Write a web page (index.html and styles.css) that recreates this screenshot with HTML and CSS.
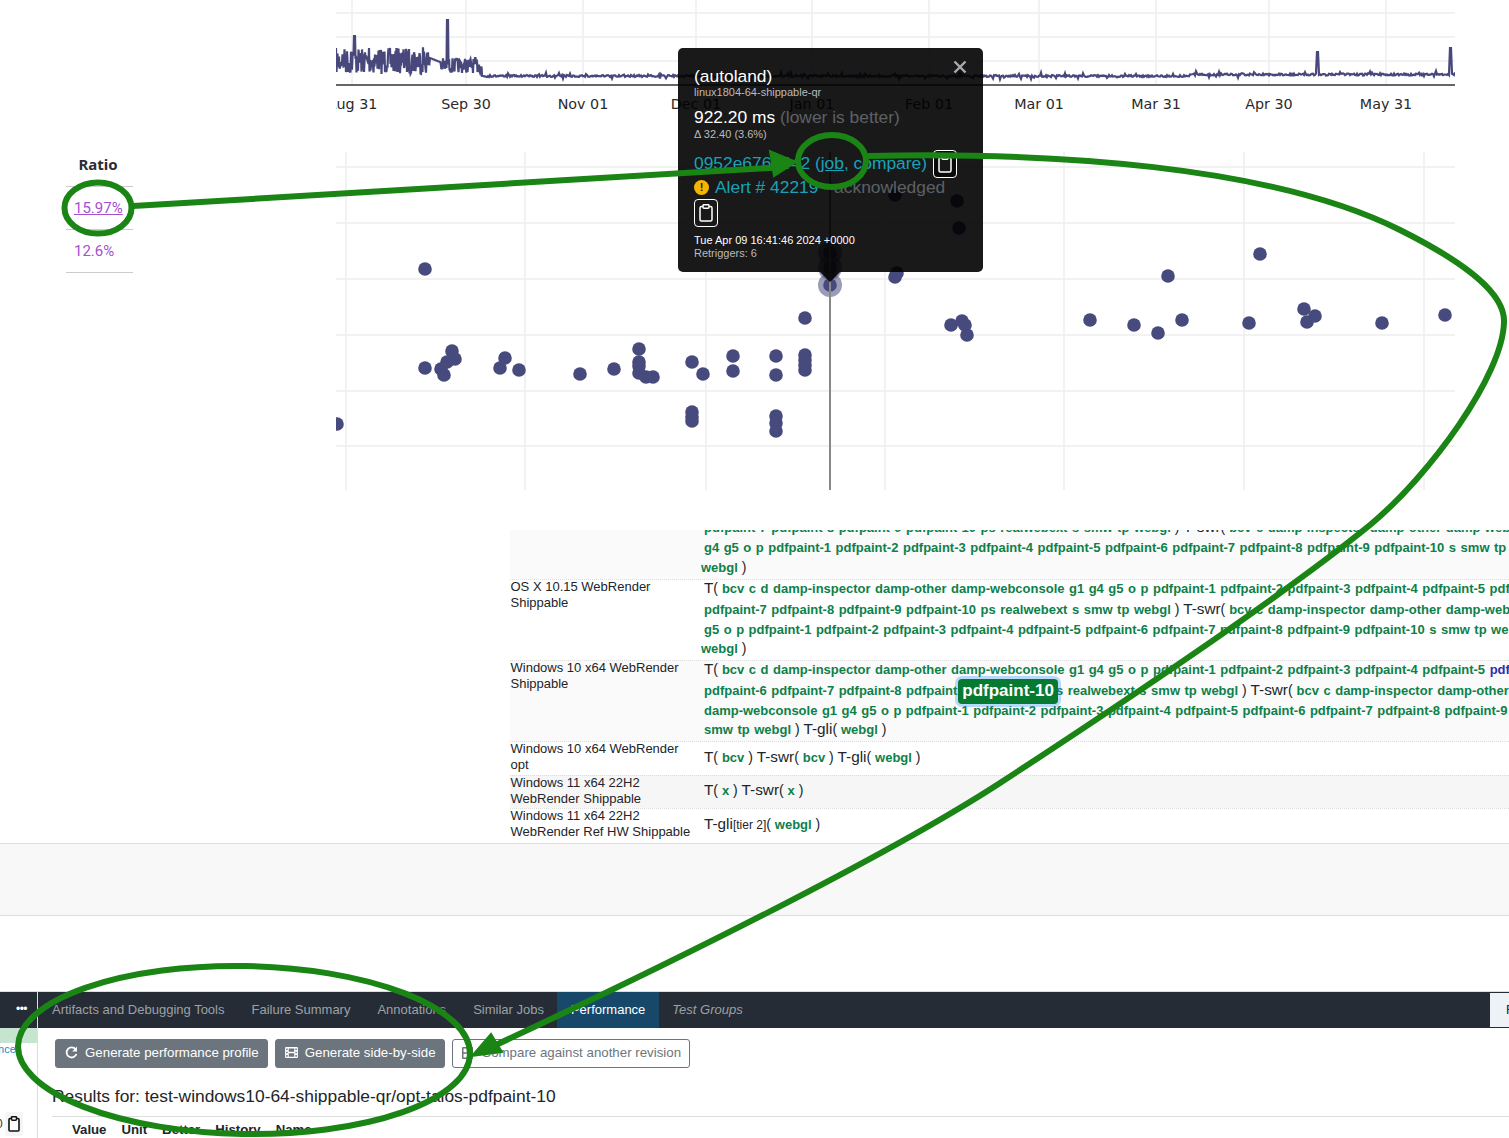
FILE: index.html
```html
<!DOCTYPE html>
<html lang="en">
<head>
    <meta charset="UTF-8">
    <meta name="viewport" content="width=device-width, initial-scale=1.0">
    <title>Perfherder alert</title>
    <link rel="stylesheet" href="styles.css">
</head>
<body>
<div class="page">
    <!-- Graph and ratio column -->
    <section class="top">
        <div class="ratio">
            <div class="ratio-head">Ratio</div>
            <div class="ratio-cell"><a class="ratio-link">15.97%</a></div>
            <div class="ratio-cell">12.6%</div>
        </div>
        <div class="graphs">
            <svg id="graph" class="graph" width="1119" height="490" viewBox="336 0 1119 490">
                <g class="grid">
                    <line x1="336" x2="1455" y1="13" y2="13"/>
                    <line x1="336" x2="1455" y1="37" y2="37"/>
                    <line x1="336" x2="1455" y1="61" y2="61"/>
                    <line x1="352" x2="352" y1="0" y2="85"/>
                    <line x1="466" x2="466" y1="0" y2="85"/>
                    <line x1="583" x2="583" y1="0" y2="85"/>
                    <line x1="696" x2="696" y1="0" y2="85"/>
                    <line x1="812" x2="812" y1="0" y2="85"/>
                    <line x1="929" x2="929" y1="0" y2="85"/>
                    <line x1="1039" x2="1039" y1="0" y2="85"/>
                    <line x1="1156" x2="1156" y1="0" y2="85"/>
                    <line x1="1269" x2="1269" y1="0" y2="85"/>
                    <line x1="1386" x2="1386" y1="0" y2="85"/>
                </g>
                <path id="overview" class="overview"/>
                <line class="axis" x1="336" x2="1455" y1="85" y2="85"/>
                <g class="ticks">
                    <text x="352" y="109">Aug 31</text>
                    <text x="466" y="109">Sep 30</text>
                    <text x="583" y="109">Nov 01</text>
                    <text x="696" y="109">Dec 01</text>
                    <text x="812" y="109">Jan 01</text>
                    <text x="929" y="109">Feb 01</text>
                    <text x="1039" y="109">Mar 01</text>
                    <text x="1156" y="109">Mar 31</text>
                    <text x="1269" y="109">Apr 30</text>
                    <text x="1386" y="109">May 31</text>
                </g>
                <g class="grid">
                    <line x1="336" x2="1455" y1="167" y2="167"/>
                    <line x1="336" x2="1455" y1="223" y2="223"/>
                    <line x1="336" x2="1455" y1="279" y2="279"/>
                    <line x1="336" x2="1455" y1="335" y2="335"/>
                    <line x1="336" x2="1455" y1="391" y2="391"/>
                    <line x1="336" x2="1455" y1="446" y2="446"/>
                    <line x1="346" x2="346" y1="152" y2="490"/>
                    <line x1="525" x2="525" y1="152" y2="490"/>
                    <line x1="706" x2="706" y1="152" y2="490"/>
                    <line x1="885" x2="885" y1="152" y2="490"/>
                    <line x1="1064" x2="1064" y1="152" y2="490"/>
                    <line x1="1244" x2="1244" y1="152" y2="490"/>
                    <line x1="1424" x2="1424" y1="152" y2="490"/>
                </g>
                <g id="dots" class="dots"></g>
                <circle class="halo" cx="830" cy="253" r="12"/>
                <circle class="halo" cx="830" cy="268" r="12"/>
                <circle class="halo" cx="830" cy="285" r="12"/>
                <line class="cursor" x1="830" x2="830" y1="152" y2="490"/>
            </svg>
        </div>
    </section>

    <!-- Platform / job table -->
    <section class="jobs">
        <div class="row row-first">
            <div class="plat"></div>
            <div class="cell">
                <div class="line ind"><b>pdfpaint-7 pdfpaint-8 pdfpaint-9 pdfpaint-10 ps realwebext s smw tp webgl</b> ) <span class="sym">T-swr</span>( <b>bcv c damp-inspector damp-other damp-webconsole</b></div>
                <div class="line ind"><b>g4 g5 o p pdfpaint-1 pdfpaint-2 pdfpaint-3 pdfpaint-4 pdfpaint-5 pdfpaint-6 pdfpaint-7 pdfpaint-8 pdfpaint-9 pdfpaint-10 s smw tp</b></div>
                <div class="line"><b>webgl</b> )</div>
            </div>
        </div>
        <div class="row row-tall">
            <div class="plat">OS X 10.15 WebRender Shippable</div>
            <div class="cell">
                <div class="line ind"><span class="sym">T</span>( <b>bcv c d damp-inspector damp-other damp-webconsole g1 g4 g5 o p pdfpaint-1 pdfpaint-2 pdfpaint-3 pdfpaint-4 pdfpaint-5 pdfpaint-6</b></div>
                <div class="line ind"><b>pdfpaint-7 pdfpaint-8 pdfpaint-9 pdfpaint-10 ps realwebext s smw tp webgl</b> ) <span class="sym">T-swr</span>( <b>bcv c damp-inspector damp-other damp-webconsole</b></div>
                <div class="line ind"><b>g5 o p pdfpaint-1 pdfpaint-2 pdfpaint-3 pdfpaint-4 pdfpaint-5 pdfpaint-6 pdfpaint-7 pdfpaint-8 pdfpaint-9 pdfpaint-10 s smw tp webgl</b></div>
                <div class="line"><b>webgl</b> )</div>
            </div>
        </div>
        <div class="row row-tall row-shade">
            <div class="plat">Windows 10 x64 WebRender Shippable</div>
            <div class="cell">
                <div class="line ind"><span class="sym">T</span>( <b>bcv c d damp-inspector damp-other damp-webconsole g1 g4 g5 o p pdfpaint-1 pdfpaint-2 pdfpaint-3 pdfpaint-4 pdfpaint-5 <i class="seen">pdfpaint-6</i></b></div>
                <div class="line ind"><b>pdfpaint-6 pdfpaint-7 pdfpaint-8 pdfpaint<span class="picked">pdfpaint-10</span>s realwebext s smw tp webgl</b> ) <span class="sym">T-swr</span>( <b>bcv c damp-inspector damp-other</b></div>
                <div class="line ind"><b>damp-webconsole g1 g4 g5 o p pdfpaint-1 pdfpaint-2 pdfpaint-3 pdfpaint-4 pdfpaint-5 pdfpaint-6 pdfpaint-7 pdfpaint-8 pdfpaint-9</b></div>
                <div class="line ind"><b>smw tp webgl</b> ) <span class="sym">T-gli</span>( <b>webgl</b> )</div>
            </div>
        </div>
        <div class="row row-small">
            <div class="plat">Windows 10 x64 WebRender opt</div>
            <div class="cell cell-mid"><div class="line ind"><span class="sym">T</span>( <b>bcv</b> ) <span class="sym">T-swr</span>( <b>bcv</b> ) <span class="sym">T-gli</span>( <b>webgl</b> )</div></div>
        </div>
        <div class="row row-small row-grey">
            <div class="plat">Windows 11 x64 22H2 WebRender Shippable</div>
            <div class="cell cell-mid"><div class="line ind"><span class="sym">T</span>( <b>x</b> ) <span class="sym">T-swr</span>( <b>x</b> )</div></div>
        </div>
        <div class="row row-small">
            <div class="plat">Windows 11 x64 22H2 WebRender Ref HW Shippable</div>
            <div class="cell cell-mid"><div class="line ind"><span class="sym">T-gli</span><small>[tier 2]</small>( <b>webgl</b> )</div></div>
        </div>
    </section>

    <div class="band"></div>

    <!-- Job details panel -->
    <section class="panel">
        <div class="tabs">
            <div class="tab-more">•••</div>
            <a class="tab">Artifacts and Debugging Tools</a>
            <a class="tab">Failure Summary</a>
            <a class="tab">Annotations</a>
            <a class="tab">Similar Jobs</a>
            <a class="tab tab-on">Performance</a>
            <a class="tab tab-em">Test Groups</a>
            <div class="tab-end">F</div>
        </div>
        <div class="panel-body">
            <aside class="panel-side">
                <div class="side-ok"></div>
                <a class="side-link">ance</a>
                <div class="side-foot">0<span class="side-copy"><svg class="clip-dark" width="12" height="16" viewBox="0 0 12 16"><rect x="1" y="2.5" width="10" height="12.5" rx="1"/><rect class="clip-top" x="3.5" y="0.7" width="5" height="3.5" rx="1"/></svg></span></div>
            </aside>
            <div class="panel-main">
                <div class="actions">
                    <button class="btn">
                        <svg width="13" height="13" viewBox="0 0 13 13"><path class="stroke" d="M10.6 3.4A5 5 0 1 0 11.4 8"/><path class="fill" d="M12 0.6V5.4H7.2Z"/></svg>
                        Generate performance profile
                    </button>
                    <button class="btn">
                        <svg width="13" height="11" viewBox="0 0 14 12"><path class="fill" fill-rule="evenodd" d="M1 0H13A1 1 0 0 1 14 1V11A1 1 0 0 1 13 12H1A1 1 0 0 1 0 11V1A1 1 0 0 1 1 0ZM1.2 1.5V3.2H2.8V1.5ZM1.2 5.1V6.9H2.8V5.1ZM1.2 8.8V10.5H2.8V8.8ZM11.2 1.5V3.2H12.8V1.5ZM11.2 5.1V6.9H12.8V5.1ZM11.2 8.8V10.5H12.8V8.8ZM4 1.5V5.2H10V1.5ZM4 6.8V10.5H10V6.8Z"/></svg>
                        Generate side-by-side
                    </button>
                    <button class="btn btn-line">
                        <svg width="11" height="12" viewBox="0 0 11 12"><path class="fill" fill-rule="evenodd" d="M1 0H10A1 1 0 0 1 11 1V11A1 1 0 0 1 10 12H1A1 1 0 0 1 0 11V1A1 1 0 0 1 1 0ZM1.5 1.5V5.2H5V1.5ZM6.2 1.5V5.2H9.5V1.5ZM1.5 6.8V10.5H5V6.8ZM6.2 6.8V10.5H9.5V6.8Z"/></svg>
                        Compare against another revision
                    </button>
                </div>
                <h3 class="results">Results for: test-windows10-64-shippable-qr/opt-talos-pdfpaint-10</h3>
                <div class="res-head">
                    <span class="h-value">Value</span><span class="h-unit">Unit</span><span class="h-better">Better</span><span class="h-hist">History</span><span>Name</span>
                </div>
            </div>
        </div>
    </section>

    <!-- Data point tooltip -->
    <div class="tip">
        <svg class="tip-close" width="14" height="14" viewBox="0 0 14 14"><path d="M1.5 1.5L12.5 12.5M12.5 1.5L1.5 12.5"/></svg>
        <div class="tip-repo">(autoland)</div>
        <div class="tip-plat">linux1804-64-shippable-qr</div>
        <div class="tip-value">922.20 ms <span class="dim">(lower is better)</span></div>
        <div class="tip-delta">Δ 32.40 (3.6%)</div>
        <div class="tip-rev">
            <a>0952e6760442</a> <a>(<u>job</u>, compare)</a>
            <span class="copy copy-rev">
                <svg width="14" height="18" viewBox="0 0 14 18"><rect x="1" y="2.5" width="12" height="14.5" rx="1.5"/><rect class="clip-top" x="4" y="0.7" width="6" height="3.6" rx="1"/></svg>
            </span>
        </div>
        <div class="tip-alert"><span class="warn">!</span><a>Alert # 42219</a> <span class="dim">- acknowledged</span></div>
        <span class="copy copy-alert">
            <svg width="14" height="18" viewBox="0 0 14 18"><rect x="1" y="2.5" width="12" height="14.5" rx="1.5"/><rect class="clip-top" x="4" y="0.7" width="6" height="3.6" rx="1"/></svg>
        </span>
        <div class="tip-date">Tue Apr 09 16:41:46 2024 +0000</div>
        <div class="tip-retrig">Retriggers: 6</div>
    </div>

    <!-- Green hand drawn marks over the screenshot -->
    <svg class="marks" width="1509" height="1138" viewBox="0 0 1509 1138">
        <ellipse cx="98" cy="208" rx="33.5" ry="25.5"/>
        <ellipse cx="832" cy="161" rx="34" ry="26"/>
        <ellipse cx="244" cy="1050" rx="226" ry="84" transform="rotate(1 244 1050)"/>
        <path d="M133 206 L785 167"/>
        <path class="head" d="M796 162 L770 151 L774 176 Z"/>
        <path d="M868 156 C 1050 152 1270 165 1400 230 C 1470 265 1505 295 1504 322 C 1503 375 1430 475 1370 525 C 1290 590 1150 685 1000 783 C 900 848 700 950 485 1050"/>
        <path class="head" d="M472 1056 L491 1034 L502 1052 Z"/>
    </svg>
</div>
<script src="chart.js"></script>
</body>
</html>
```

FILE: styles.css
```css
html, body {
    margin: 0;
    background-color: #fff;
}
.page {
    position: relative;
    width: 1509px;
    height: 1138px;
    overflow: hidden;
    font-family: "Liberation Sans", Arial, sans-serif;
    color: #212529;
}

/* top: ratio column and graphs */
.top {
    display: flex;
    height: 530px;
}
.ratio {
    width: 67px;
    margin: 145px 203px 0 66px;
    font-family: Roboto, sans-serif;
    font-size: 15px;
    color: #a64fd1;
}
.ratio-head {
    height: 41px;
    line-height: 39px;
    padding-right: 3px;
    width: 64px;
    border-bottom: 1px solid #ccc;
    text-align: center;
    font-family: "Noto Sans", sans-serif;
    font-weight: 700;
    font-size: 15px;
    color: #2b2b36;
}
.ratio-cell {
    height: 42px;
    line-height: 43px;
    padding-left: 8px;
    border-bottom: 1px solid #ccc;
}
.ratio-link {
    text-decoration: underline;
}
.graph {
    display: block;
}
.grid line {
    stroke: #eee;
    stroke-width: 1.5;
}
.overview {
    fill: none;
    stroke: #48487c;
    stroke-width: 2.2;
}
.axis {
    stroke: #666;
    stroke-width: 2;
}
.ticks text {
    font-family: "DejaVu Sans", sans-serif;
    font-size: 14.3px;
    text-anchor: middle;
    fill: #2a2a2a;
}
.dots circle {
    fill: #474a7d;
}
.halo {
    fill: #474a7d;
    fill-opacity: .55;
}
.cursor {
    stroke: #888;
    stroke-width: 2;
}

/* platform table */
.jobs {
    height: 313px;
    margin-left: 510px;
    overflow: hidden;
    font-size: 13px;
}
.row {
    display: flex;
    border-top: 1px dotted #ddd;
    box-sizing: border-box;
}
.row-first {
    height: 49px;
    border-top: none;
    align-items: flex-end;
    background-color: #fafafa;
    padding-bottom: 2px;
}
.row-tall {
    height: 81px;
}
.row-small {
    height: 34px;
}
.row-shade {
    background-color: #fafafa;
}
.row-grey {
    height: 33px;
    background-color: #f6f6f6;
}
.plat {
    flex: none;
    width: 191px;
    line-height: 16px;
    margin-top: -1px;
    padding: 0 8px 0 .5px;
    box-sizing: border-box;
}
.cell {
    flex: 1;
    min-width: 0;
    overflow: hidden;
}
.row-tall .cell {
    margin-top: -2px;
}
.row-tall .line:nth-child(1) {
    height: 21px;
}
.row-tall .line:nth-child(3) {
    height: 19px;
}
.cell-mid {
    display: flex;
    align-items: center;
    margin-top: -2px;
    padding-bottom: 2px;
}
.row-grey .cell-mid {
    margin-top: -1px;
    padding-bottom: 3px;
}
.line {
    height: 20px;
    line-height: 20px;
    white-space: nowrap;
    font-size: 14px;
}
.ind {
    padding-left: 3px;
}
.line b {
    font-size: 13px;
    color: #0d8049;
    word-spacing: .9px;
}
.seen {
    font-style: normal;
    color: #2b2fb0;
}
.sym {
    font-size: 15.3px;
}
small {
    font-size: 12px;
}
.picked {
    position: relative;
    top: 1px;
    display: inline-block;
    line-height: 23px;
    padding: 0 4px 2px;
    margin: -2px -2px -4px 1px;
    font-size: 17px;
    color: #fff;
    background-color: #067a30;
    border-radius: 4px;
    box-shadow: 0 0 0 3px rgba(38, 143, 255, .3);
}

.band {
    height: 73px;
    box-sizing: border-box;
    border-top: 1px solid #ddd;
    border-bottom: 1px solid #ddd;
    background-color: #f8f8f8;
}

/* bottom panel */
.panel {
    margin-top: 75px;
    border-top: 1px solid #ddd;
}
.tabs {
    display: flex;
    align-items: center;
    height: 36px;
    background-color: #252c36;
    color: #9da1a5;
    font-size: 13px;
}
.tab-more {
    width: 38px;
    height: 36px;
    line-height: 34px;
    text-align: center;
    color: #fff;
    font-size: 12px;
    letter-spacing: -.5px;
    box-sizing: border-box;
    padding-left: 6px;
    border-right: 1px solid #ddd;
}
.tab {
    height: 36px;
    line-height: 36px;
    padding: 0 13.5px;
}
.tab:first-of-type {
    padding-left: 14px;
}
.tab-on {
    color: #fff;
    background-color: #17486a;
}
.tab-em {
    font-style: italic;
}
.tab-end {
    margin-left: auto;
    width: 19px;
    height: 34px;
    line-height: 34px;
    padding-left: 16px;
    box-sizing: border-box;
    overflow: hidden;
    background-color: #eef1f5;
    color: #212529;
}
.panel-body {
    display: flex;
    height: 110px;
}
.panel-side {
    position: relative;
    flex: none;
    width: 38px;
    box-sizing: border-box;
    border-right: 1px solid #ddd;
    font-size: 11px;
}
.side-ok {
    height: 15px;
    background-color: #c6e5d0;
}
.side-link {
    display: block;
    margin-left: -8px;
    color: #1a8ac2;
    overflow: hidden;
}
.side-foot {
    position: absolute;
    top: 84px;
    left: -4px;
    display: flex;
    align-items: center;
    font-size: 12px;
    color: #333;
}
.side-copy {
    display: flex;
    padding: 4px 3px;
    margin-left: 2px;
    background-color: #f5f5f8;
    border-radius: 3px;
}
.clip-dark rect {
    fill: #fff;
    stroke: #111;
    stroke-width: 1.6;
}
.panel-main {
    flex: 1;
    padding: 11px 0 0 14px;
}
.actions {
    display: flex;
    gap: 7px;
    margin-left: 3px;
}
.btn {
    display: flex;
    align-items: center;
    gap: 7px;
    height: 29px;
    padding: 0 8px 2px 9px;
    border: 1px solid #6c757d;
    border-radius: 3px;
    background-color: #6c757d;
    color: #fff;
    font-family: inherit;
    font-size: 13.3px;
}
.btn .fill {
    fill: currentColor;
}
.btn .stroke {
    fill: none;
    stroke: currentColor;
    stroke-width: 1.8;
}
.btn-line {
    gap: 9px;
    background-color: #fff;
    color: #6c757d;
}
.results {
    margin: 17px 0 0;
    padding-bottom: 9px;
    font-size: 17.4px;
    line-height: 22px;
    font-weight: 400;
    border-bottom: 1px solid #ddd;
}
.res-head {
    padding: 5px 0 0 20px;
    font-size: 13.2px;
    font-weight: 700;
    line-height: 16px;
}
.h-value { margin-right: 15px; }
.h-unit { margin-right: 15px; }
.h-better { margin-right: 15px; }
.h-hist { margin-right: 15px; }

/* tooltip */
.tip {
    position: absolute;
    left: 678px;
    top: 48px;
    width: 305px;
    height: 224px;
    box-sizing: border-box;
    padding: 18px 16px 0;
    border-radius: 5px;
    background-color: rgba(0, 0, 0, .9);
    color: #fff;
    font-size: 11px;
}
.tip::after {
    content: "";
    position: absolute;
    left: 142px;
    top: 224px;
    border: 10px solid transparent;
    border-bottom: none;
    border-top-color: rgba(0, 0, 0, .9);
}
.tip-close {
    position: absolute;
    right: 16px;
    top: 12px;
}
.tip-close path {
    fill: none;
    stroke: #aaa;
    stroke-width: 2.4;
}
.tip-repo {
    font-size: 17.4px;
    line-height: 20px;
}
.tip-plat {
    line-height: 12px;
    color: #bbb;
}
.tip-value {
    margin-top: 9px;
    font-size: 17.4px;
    line-height: 20px;
}
.dim {
    color: #5d6166;
}
.tip-delta {
    line-height: 14px;
    color: #bbb;
}
.tip-rev {
    position: relative;
    margin-top: 11px;
    font-size: 17.4px;
    line-height: 22px;
    white-space: nowrap;
}
.tip a {
    color: #17a2b8;
}
.tip-alert {
    display: flex;
    align-items: center;
    gap: 5px;
    margin-top: 1px;
    font-size: 17.4px;
    line-height: 24px;
}
.warn {
    width: 15px;
    height: 15px;
    margin-right: 1px;
    border-radius: 50%;
    background-color: #f5b400;
    color: #222;
    text-align: center;
    font-size: 11px;
    font-weight: 700;
    line-height: 15px;
}
.copy {
    display: flex;
    align-items: center;
    justify-content: center;
    width: 24px;
    height: 28px;
    box-sizing: border-box;
    border: 1px solid #fff;
    border-radius: 4px;
}
.copy-rev {
    position: absolute;
    left: 239px;
    top: -2px;
    background-color: rgba(0, 0, 0, .6);
}
.copy rect {
    fill: #181818;
    stroke: #fff;
    stroke-width: 1.5;
}
.tip-date {
    margin-top: 7px;
    line-height: 13px;
}
.tip-retrig {
    line-height: 13px;
    color: #bbb;
}

/* annotations */
.marks {
    position: absolute;
    left: 0;
    top: 0;
    pointer-events: none;
}
.marks ellipse, .marks path {
    fill: none;
    stroke: #1a8415;
    stroke-width: 6;
}
.marks .head {
    fill: #1a8415;
    stroke-width: 2;
}
```

FILE: chart.js
```js
// graph data, read off the perfherder view
const dots = [
    [337, 424], [425, 269], [425, 368], [452, 351], [455, 359], [447, 362], [441, 369], [444, 375],
    [505, 358], [500, 368], [519, 370], [580, 374], [614, 369], [639, 349], [639, 362], [639, 366],
    [639, 373], [646, 377], [653, 377], [692, 362], [703, 374], [733, 356], [733, 371], [776, 356],
    [776, 375], [805, 318], [805, 355], [805, 360], [805, 365], [805, 370], [692, 412], [692, 417],
    [692, 421], [776, 416], [776, 423], [776, 431], [830, 253], [830, 268], [830, 285], [895, 195],
    [957, 201], [959, 228], [895, 277], [897, 273], [1168, 276], [1260, 254], [951, 325], [962, 321],
    [965, 325], [967, 335], [1090, 320], [1134, 325], [1158, 333], [1182, 320], [1249, 323],
    [1304, 309], [1307, 322], [1315, 316], [1382, 323], [1445, 315]
];

const dotsGroup = document.getElementById("dots");
dots.forEach(([x, y]) => {
    const c = document.createElementNS("http://www.w3.org/2000/svg", "circle");
    c.setAttribute("cx", x);
    c.setAttribute("cy", y);
    c.setAttribute("r", 6.8);
    dotsGroup.appendChild(c);
});

// fixed seed so the line is the same on every load
let seed = 7;
function rnd() {
    seed = (seed * 16807) % 2147483647;
    return seed / 2147483647;
}

function overviewY(x) {
    if (x >= 354 && x <= 355) return 36;
    if (x >= 447 && x <= 448) return 20;
    if (x >= 1317 && x <= 1318) return 52;
    if (x >= 1450 && x <= 1451) return 48;
    if (x < 430) return 48 + rnd() * 26 - (x % 9 === 0 ? 6 : 0);
    if (x < 441) return 58 + (x - 430) * .4;
    if (x < 482) return 58 + rnd() * 15;
    const base = x < 1190 ? 76 : 74.5;
    const spike = rnd() < .12 ? (rnd() - .5) * 7 : (rnd() - .5) * 2;
    return base + spike;
}

let d = "";
for (let x = 336; x <= 1455; x += x < 482 ? .5 : 1) {
    d += (x === 336 ? "M" : "L") + x + " " + overviewY(x).toFixed(1);
}
document.getElementById("overview").setAttribute("d", d);
```
